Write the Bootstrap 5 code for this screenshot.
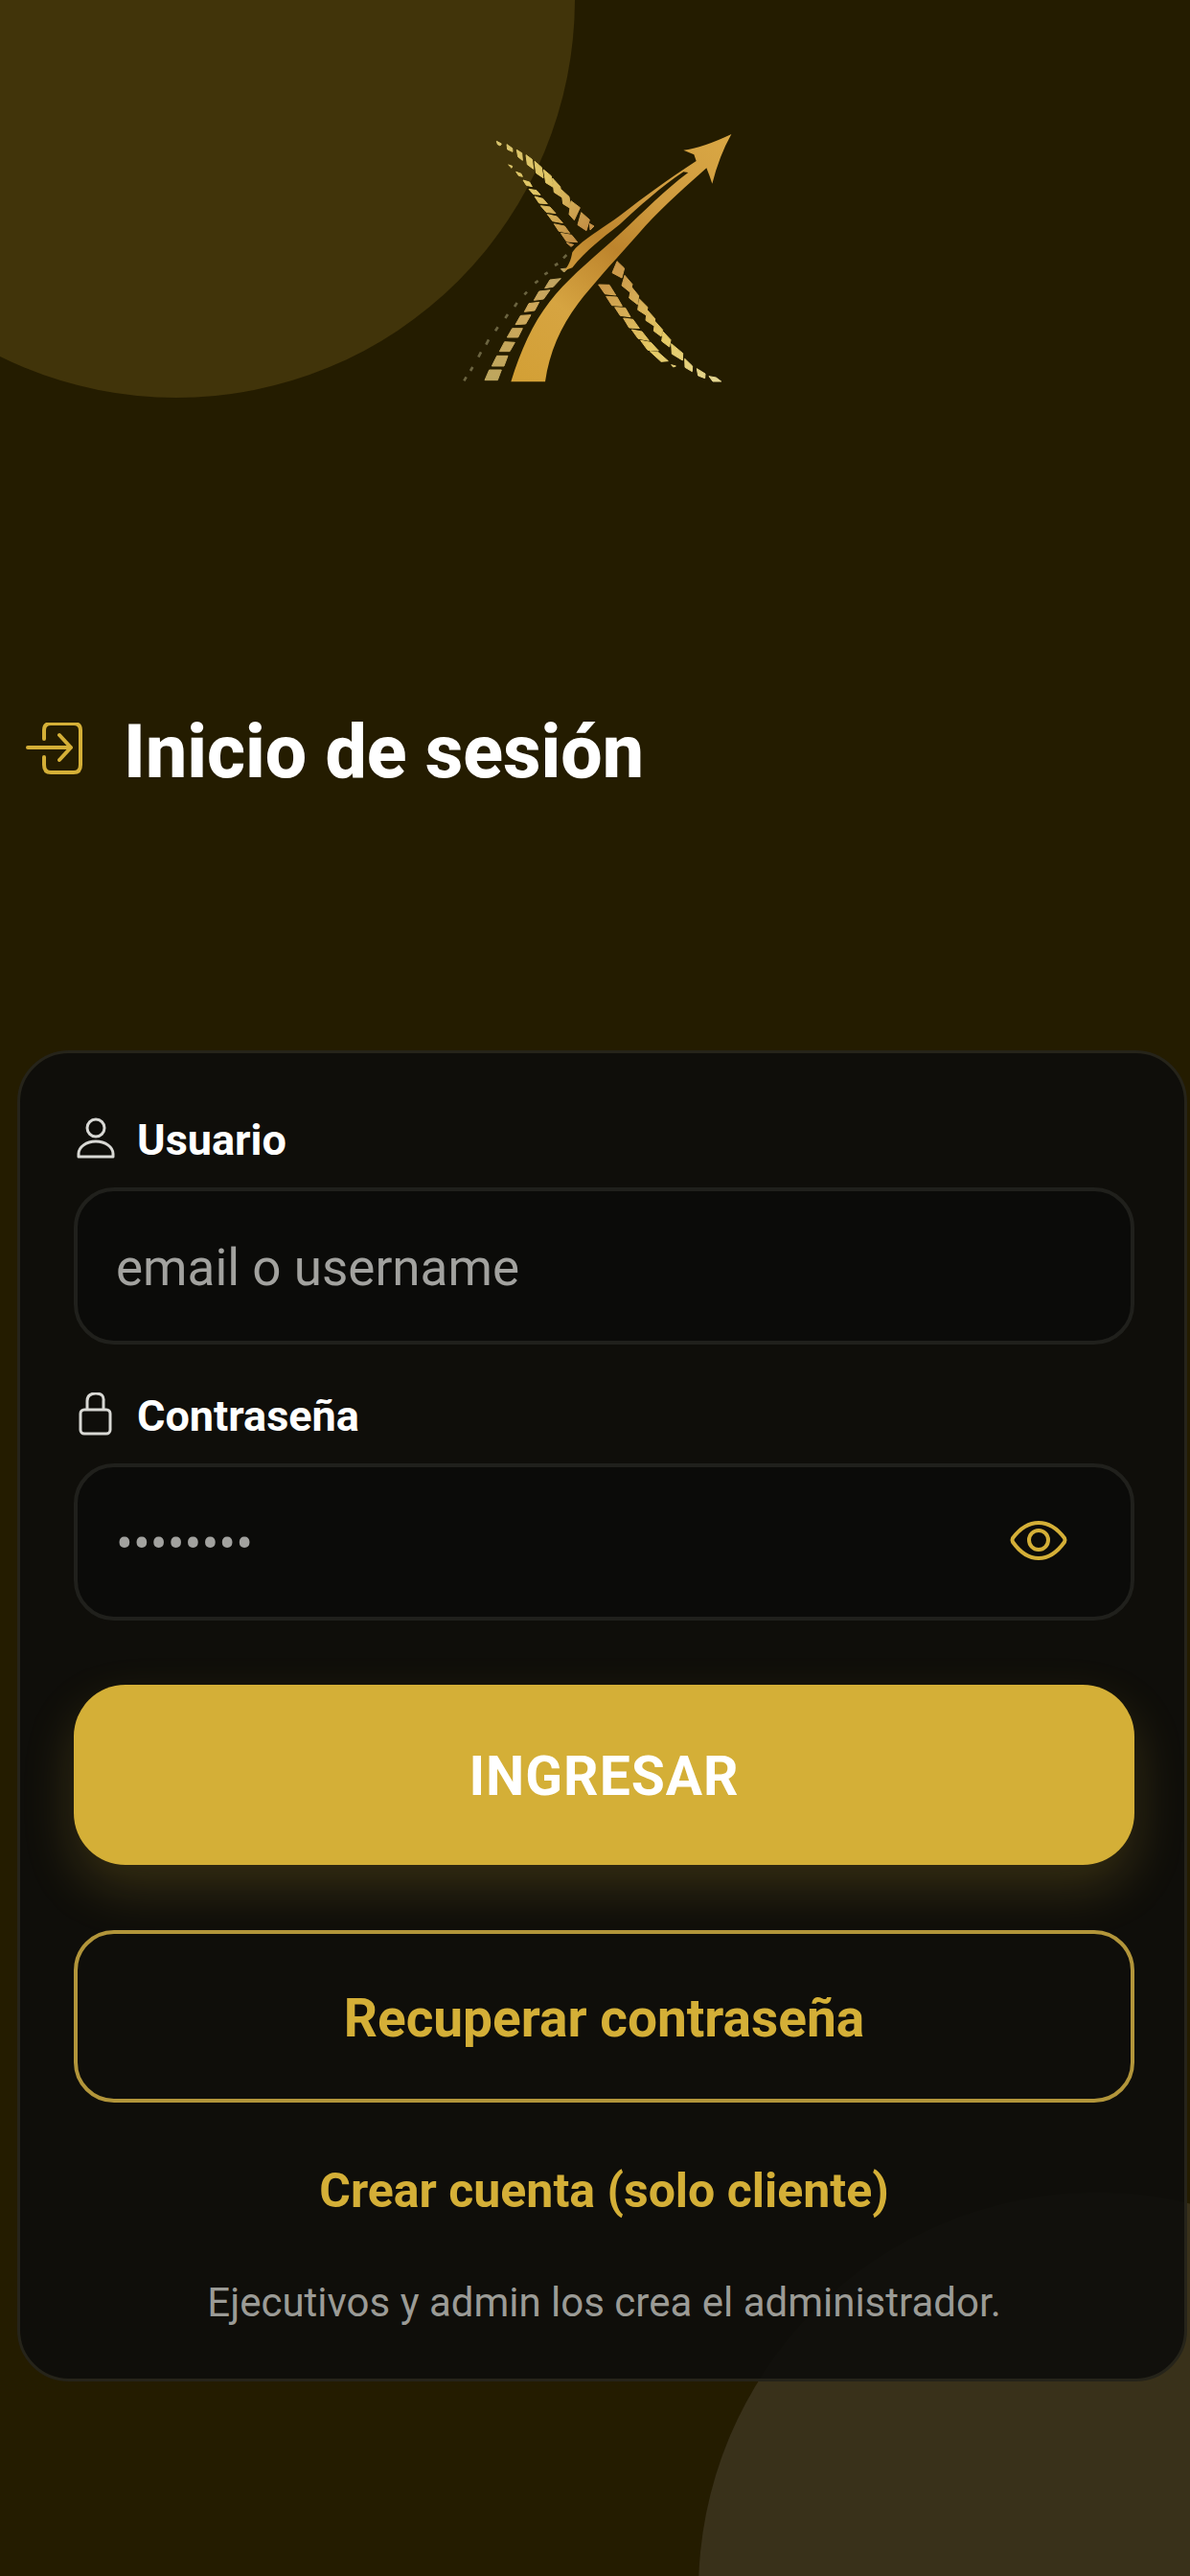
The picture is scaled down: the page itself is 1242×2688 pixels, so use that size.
<!DOCTYPE html>
<html lang="es">
<head>
<meta charset="utf-8">
<meta name="viewport" content="width=device-width, initial-scale=1">
<title>Inicio de sesión</title>
<link href="https://cdn.jsdelivr.net/npm/bootstrap@5.3.0/dist/css/bootstrap.min.css" rel="stylesheet">
<style>
  :root { --gold: #d4af37; --night: #241c00; }
  body { background: var(--night); color: #fff; font-family: Roboto, "Noto Sans", sans-serif; }
  .login-page { min-height: 100vh; padding: 136px 3px 140px 18px; }
  .orb { width: 832px; height: 832px; z-index: 0; }
  .orb-top { left: -232px; top: -417px; background: #41340a; }
  .orb-bottom { right: -319px; bottom: -432px; background: #39311a; }
  .brand-logo { width: 303px; height: 267px; }
  .page-title { font-size: 77px; line-height: 90px; font-weight: 800; gap: 42px; margin: 337px 0 266px; padding-left: 7px; }
  .page-title svg { width: 62px; height: 62px; color: var(--gold); }
  .login-card { background: rgba(13, 13, 11, .9); border: 3px solid #26241a; border-radius: 54px; padding: 64px 52px 54px 56px; }
  .field-label { font-size: 45px; line-height: 54px; font-weight: 700; gap: 20px; margin-bottom: 22px; }
  .field-label svg { width: 46px; height: 50px; color: #d8d8d4; }
  .field-input, .field-input:focus { height: 164px; font-size: 53px; line-height: 64px; padding: 4px 40px 0; color: #fff; background: #0b0b09; border: 4px solid #20201c; border-radius: 42px; box-shadow: none; }
  .field-input::placeholder { color: #a2a29f; opacity: 1; }
  .eye-btn { top: 0; right: 50px; height: 164px; width: 100px; color: var(--gold); }
  .eye-btn svg { width: 64px; height: 64px; }
  .action-stack { margin-top: 67px; gap: 68px; }
  .btn-enter, .btn-recover { padding: 4px 12px 0; font-weight: 700; }
  .btn-enter { height: 188px; border-radius: 54px; border: 0; background: var(--gold); color: #fff; font-size: 57px; box-shadow: 0 24px 54px rgba(212, 175, 55, .2); letter-spacing: 1px; }
  .btn-recover { height: 180px; border-radius: 42px; border: 4px solid #b2953a; color: var(--gold); font-size: 55px; }
  .btn-enter:hover { background: #c5a231; color: #fff; }
  .btn-recover:hover { border-color: var(--gold); color: var(--gold); }
  .foot-links { margin-top: 62px; }
  .link-create { color: var(--gold); font-size: 50px; line-height: 60px; font-weight: 700; }
  .foot-note { color: #9b9b96; font-size: 42px; line-height: 50px; margin-top: 62px; }
</style>
</head>
<body>
<main class="login-page position-relative overflow-hidden d-flex flex-column">
  <div class="orb orb-top position-absolute rounded-circle"></div>
  <div class="orb orb-bottom position-absolute rounded-circle"></div>

  <header class="position-relative text-center">
    <svg class="brand-logo d-block mx-auto" viewBox="51 50 909 801" role="img" aria-label="Logo">
      <defs>
        <linearGradient id="arrowGold" gradientUnits="userSpaceOnUse" x1="270" y1="837" x2="900" y2="70">
          <stop offset="0" stop-color="#d3a036"/><stop offset=".25" stop-color="#d6a441"/>
          <stop offset=".5" stop-color="#bd842c"/><stop offset=".7" stop-color="#cf9b3f"/><stop offset="1" stop-color="#d9a744"/>
        </linearGradient>
        <linearGradient id="strandGold" gradientUnits="userSpaceOnUse" x1="180" y1="90" x2="870" y2="830">
          <stop offset="0" stop-color="#d8c36c"/><stop offset=".18" stop-color="#e2c866"/>
          <stop offset=".38" stop-color="#c38f45"/><stop offset=".55" stop-color="#cc9a4a"/>
          <stop offset=".8" stop-color="#e6cb67"/><stop offset="1" stop-color="#e4d591"/>
        </linearGradient>
        <linearGradient id="tailGold" gradientUnits="userSpaceOnUse" x1="150" y1="830" x2="400" y2="480">
          <stop offset="0" stop-color="#bda65e"/><stop offset=".6" stop-color="#cfa85a"/><stop offset="1" stop-color="#b9a264"/>
        </linearGradient>
      </defs>
      <g fill="url(#strandGold)" stroke="url(#strandGold)" stroke-width="3" stroke-linejoin="round">
        <path d="M175 84L190 92 186 98 178 94ZM207 94L224 106 225 117 209 110ZM238 111L254 121 256 144 242 133ZM267 127L286 141 290 171 271 157ZM294 147L316 166 321 199 299 184ZM322 173L346 193 352 228 329 214ZM350 200L374 226 380 260 355 244ZM377 235L402 258 407 295 383 280ZM408 271L436 292 418 331 402 313ZM440 307L466 330 456 364 429 346ZM466 342L480 350 468 362Z"/>
        <path d="M212 158L224 162 222 168ZM236 180L252 186 256 195 244 192ZM258 206L278 212 286 226 268 222ZM276 234L300 238 312 252 290 250ZM294 257L320 264 334 280 308 278ZM313 286L342 290 360 310 330 306ZM334 313L364 320 382 340 350 334ZM355 343L388 350 404 372 370 366ZM376 372L410 378 428 400 394 398ZM394 402L416 408 408 414Z"/>
        <path d="M552 460L575 482 567 512 537 496ZM576 504L600 532 592 556 567 536ZM597 540L620 568 616 595 590 575ZM622 578L648 604 642 628 617 612ZM646 612L671 640 668 662 642 645ZM671 648L695 675 690 695 667 678ZM696 680L720 706 716 728 692 710ZM722 718L758 748 757 770 724 750ZM764 765L788 788 787 805 765 792ZM802 796L828 812 827 826 806 818ZM840 820L862 824 878 836 852 836Z"/>
        <path d="M494 533L528 534 548 566 514 562ZM518 570L552 572 568 600 536 598ZM545 604L578 606 594 634 562 630ZM572 638L602 642 622 670 590 668ZM598 674L630 680 652 708 618 702ZM626 708L658 714 682 740 648 738ZM655 742L680 744 712 772 690 774ZM722 784L736 788 728 791Z"/>
      </g>
      <path fill="url(#tailGold)" stroke="url(#tailGold)" stroke-width="3" stroke-linejoin="round" d="M152 800L190 800 178 832 138 832ZM176 756L210 756 198 788 160 788ZM200 712L232 714 216 742 184 742ZM224 670L256 670 242 698 208 698ZM250 630L282 628 266 656 234 658ZM276 592L308 588 294 614 262 618ZM308 554L342 550 322 578 292 582ZM342 518L376 514 352 540 326 544ZM376 484L398 482 386 494Z"/>
      <path fill="none" stroke="#6b6440" stroke-width="8" d="M73 834L80 822M93 803L100 791M118 760L126 744M142 721L150 705M171 678L179 666M202 638L210 626M231 602L239 590M262 564L270 556M295 528L305 521M325 501L335 495M357 473L367 467M384 450L394 440"/>
      <path fill="url(#arrowGold)" d="M220 837C250 740 288 655 340 588C400 510 480 448 560 375C640 300 700 238 775 182L760 180C690 226 620 290 560 345C500 392 450 430 412 480L384 490C400 478 408 455 412 432C430 402 500 362 560 318C640 255 710 205 800 146L793 126 760 112Q820 105 910 62Q872 130 850 217Q842 192 832 168C780 215 700 285 640 350C570 430 490 515 430 592C375 665 340 745 327 837Z"/>
    </svg>
  </header>

  <h1 class="page-title position-relative d-flex align-items-center">
    <svg viewBox="-1 5 62 62" fill="none" stroke="currentColor" stroke-width="4" stroke-linecap="round" stroke-linejoin="round" aria-hidden="true">
      <path d="M20 22V13Q20 6 27 6H51Q58 6 58 13V49Q58 57 51 57H27Q20 57 20 49V41M3 31H48M36 18L48 31 36 44"/>
    </svg>
    <span>Inicio de sesión</span>
  </h1>

  <form class="login-card position-relative" onsubmit="return false">
    <label class="field-label d-flex align-items-center" for="user">
      <svg viewBox="-1 1 46 50" fill="none" stroke="currentColor" stroke-width="3" stroke-linejoin="round" aria-hidden="true">
        <circle cx="22" cy="13" r="9"/><path d="M4 43V40C4 33 12 27 22 27S40 33 40 40V43Z"/>
      </svg>
      <span>Usuario</span>
    </label>
    <input class="field-input form-control" id="user" type="text" placeholder="email o username" autocomplete="username">

    <label class="field-label d-flex align-items-center mt-5" for="pass">
      <svg viewBox="-1 2 46 50" fill="none" stroke="currentColor" stroke-width="3" stroke-linejoin="round" aria-hidden="true">
        <rect x="6" y="20" width="31" height="25" rx="4"/><path d="M13 20V11Q13 3 22 3T30 11V20"/>
      </svg>
      <span>Contraseña</span>
    </label>
    <div class="position-relative">
      <input class="field-input form-control" id="pass" type="password" placeholder="••••••••" autocomplete="current-password">
      <button class="eye-btn btn p-0 border-0 position-absolute d-flex align-items-center justify-content-center" type="button" aria-label="Mostrar contraseña">
        <svg viewBox="0 0 64 64" fill="none" stroke="currentColor" stroke-width="4" stroke-linejoin="round" aria-hidden="true">
          <path d="M5 32Q4 30 5 28Q17 12 32 12T59 28Q60 30 59 32Q47 49 32 49T5 32Z"/><circle cx="32" cy="30" r="10"/>
        </svg>
      </button>
    </div>

    <div class="action-stack d-grid">
      <button class="btn btn-enter" type="submit">INGRESAR</button>
      <button class="btn btn-recover" type="button">Recuperar contraseña</button>
    </div>
    <div class="foot-links text-center">
      <a class="link-create text-decoration-none d-inline-block" href="#crear">Crear cuenta (solo cliente)</a>
      <p class="foot-note mb-0">Ejecutivos y admin los crea el administrador.</p>
    </div>
  </form>
</main>
<script src="https://cdn.jsdelivr.net/npm/bootstrap@5.3.0/dist/js/bootstrap.bundle.min.js"></script>
</body>
</html>
